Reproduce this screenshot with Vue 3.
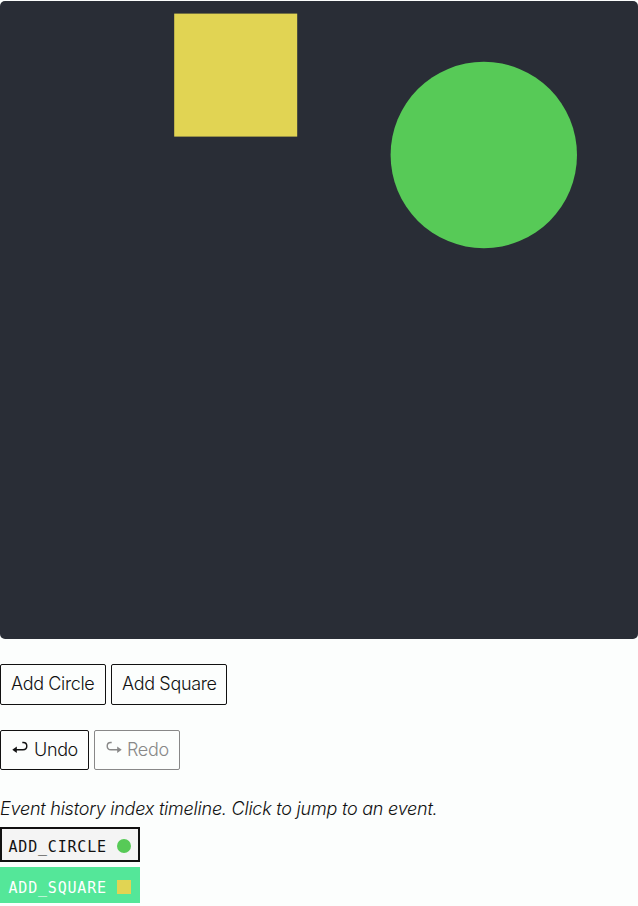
<script setup>
import { ref, computed } from 'vue'

const events = ref([
  { type: 'ADD_CIRCLE', shape: 'circle', cx: 483.8, cy: 154, r: 93.2, color: '#57ca57' },
  { type: 'ADD_SQUARE', shape: 'square', x: 174.2, y: 12.6, size: 123, color: '#e1d453' },
])
const current = ref(1)
const shapes = computed(() => events.value.slice(0, current.value + 1))

function add(shape) {
  const x = 60 + Math.random() * 400
  const y = 60 + Math.random() * 400
  const event = shape === 'circle'
    ? { type: 'ADD_CIRCLE', shape, cx: x, cy: y, r: 60, color: '#57ca57' }
    : { type: 'ADD_SQUARE', shape, x, y, size: 120, color: '#e1d453' }
  events.value = [...shapes.value, event]
  current.value = events.value.length - 1
}
</script>

<template>
  <main class="page">
    <svg class="canvas" viewBox="0 0 638 638">
      <template v-for="(s, i) in shapes" :key="i">
        <circle v-if="s.shape === 'circle'" :cx="s.cx" :cy="s.cy" :r="s.r" :fill="s.color" />
        <rect v-else :x="s.x" :y="s.y" :width="s.size" :height="s.size" :fill="s.color" />
      </template>
    </svg>
    <div class="row add-row">
      <button class="btn circle-btn" @click="add('circle')"><span>Add Circle</span></button>
      <button class="btn square-btn" @click="add('square')"><span>Add Square</span></button>
    </div>
    <div class="row history-row">
      <button class="btn undo" :disabled="current < 0" @click="current--">
        <svg class="arrow" viewBox="0 0 16 14">
          <path d="M3 8.8H11C13.6 8.8 14.8 7.2 14.8 5.1S13.5 1.5 11.3 1.5H10.3" />
          <path class="head" d="M.3 8.8L4.8 5.6V12Z" />
        </svg>
        <span>Undo</span>
      </button>
      <button class="btn redo" :disabled="current >= events.length - 1" @click="current++">
        <svg class="arrow" viewBox="0 0 16 14">
          <path d="M13 8.8H5C2.4 8.8 1.2 7.2 1.2 5.1S2.5 1.5 4.7 1.5H5.7" />
          <path class="head" d="M15.7 8.8L11.2 5.6V12Z" />
        </svg>
        <span>Redo</span>
      </button>
    </div>
    <p class="caption">Event history index timeline. Click to jump to an event.</p>
    <div class="timeline">
      <button
        v-for="(e, i) in events"
        :key="i"
        class="event"
        :class="{ active: i === current }"
        @click="current = i"
      >
        <span>{{ e.type }}</span>
        <svg class="chip" viewBox="0 0 14 14">
          <circle v-if="e.shape === 'circle'" cx="7" cy="7" r="7" :fill="e.color" />
          <rect v-else width="14" height="14" :fill="e.color" />
        </svg>
      </button>
    </div>
  </main>
</template>

<style>
body {
  background: #fcfefd;
}
</style>

<style scoped>
.page {
  height: 906px;
  box-sizing: border-box;
  padding-top: 1px;
  overflow: hidden;
  font-family: Inter, "Liberation Sans", sans-serif;
  font-size: 18px;
  font-weight: 300;
  color: #111;
}
.canvas {
  display: block;
  width: 638px;
  height: 638px;
  border-radius: 5px;
  background: #292d36;
}
.row {
  display: flex;
  gap: 5px;
}
.add-row {
  margin-top: 25px;
}
.history-row {
  margin-top: 25px;
}
.btn {
  display: flex;
  align-items: center;
  box-sizing: border-box;
  height: 41px;
  padding: 0 0 1px 10px;
  border: 1px solid #111;
  border-radius: 2px;
  background: transparent;
  color: inherit;
  font: inherit;
  letter-spacing: -0.35px;
  white-space: nowrap;
}
.add-row .btn {
  padding-bottom: 2px;
}
.circle-btn {
  width: 106px;
}
.square-btn {
  width: 116px;
}
.history-row .btn {
  height: 40px;
}
.undo {
  width: 89px;
}
.redo {
  width: 86px;
}
.btn:disabled {
  color: #888;
  border-color: #888;
}
.arrow {
  width: 16px;
  height: 14px;
  margin: 0 6px 3px 1px;
  fill: none;
  stroke: currentColor;
  stroke-width: 1.4;
}
.redo .arrow {
  margin-right: 5px;
}
.head {
  fill: currentColor;
  stroke: none;
}
.caption {
  margin: 26px 0 0;
  line-height: 26px;
  font-style: italic;
  letter-spacing: -0.23px;
  white-space: nowrap;
}
.timeline {
  display: flex;
  flex-direction: column;
  gap: 5px;
  margin-top: 5px;
}
.event {
  display: flex;
  align-items: center;
  justify-content: space-between;
  box-sizing: border-box;
  width: 140px;
  height: 35px;
  padding: 3px 7px 0 6.5px;
  border: 2px solid #111;
  border-radius: 0;
  background: #f4f4f4;
  color: #111;
  font: 400 15px "DejaVu Sans Mono", monospace;
  letter-spacing: 0.8px;
  white-space: nowrap;
}
.event.active {
  height: 36px;
  padding-top: 4px;
  border-color: #54e799;
  background: #54e799;
  color: #fff;
}
.event span {
  padding-top: 1px;
  margin-right: -2px;
}
.chip {
  flex: none;
  width: 14px;
  height: 14px;
}
</style>
